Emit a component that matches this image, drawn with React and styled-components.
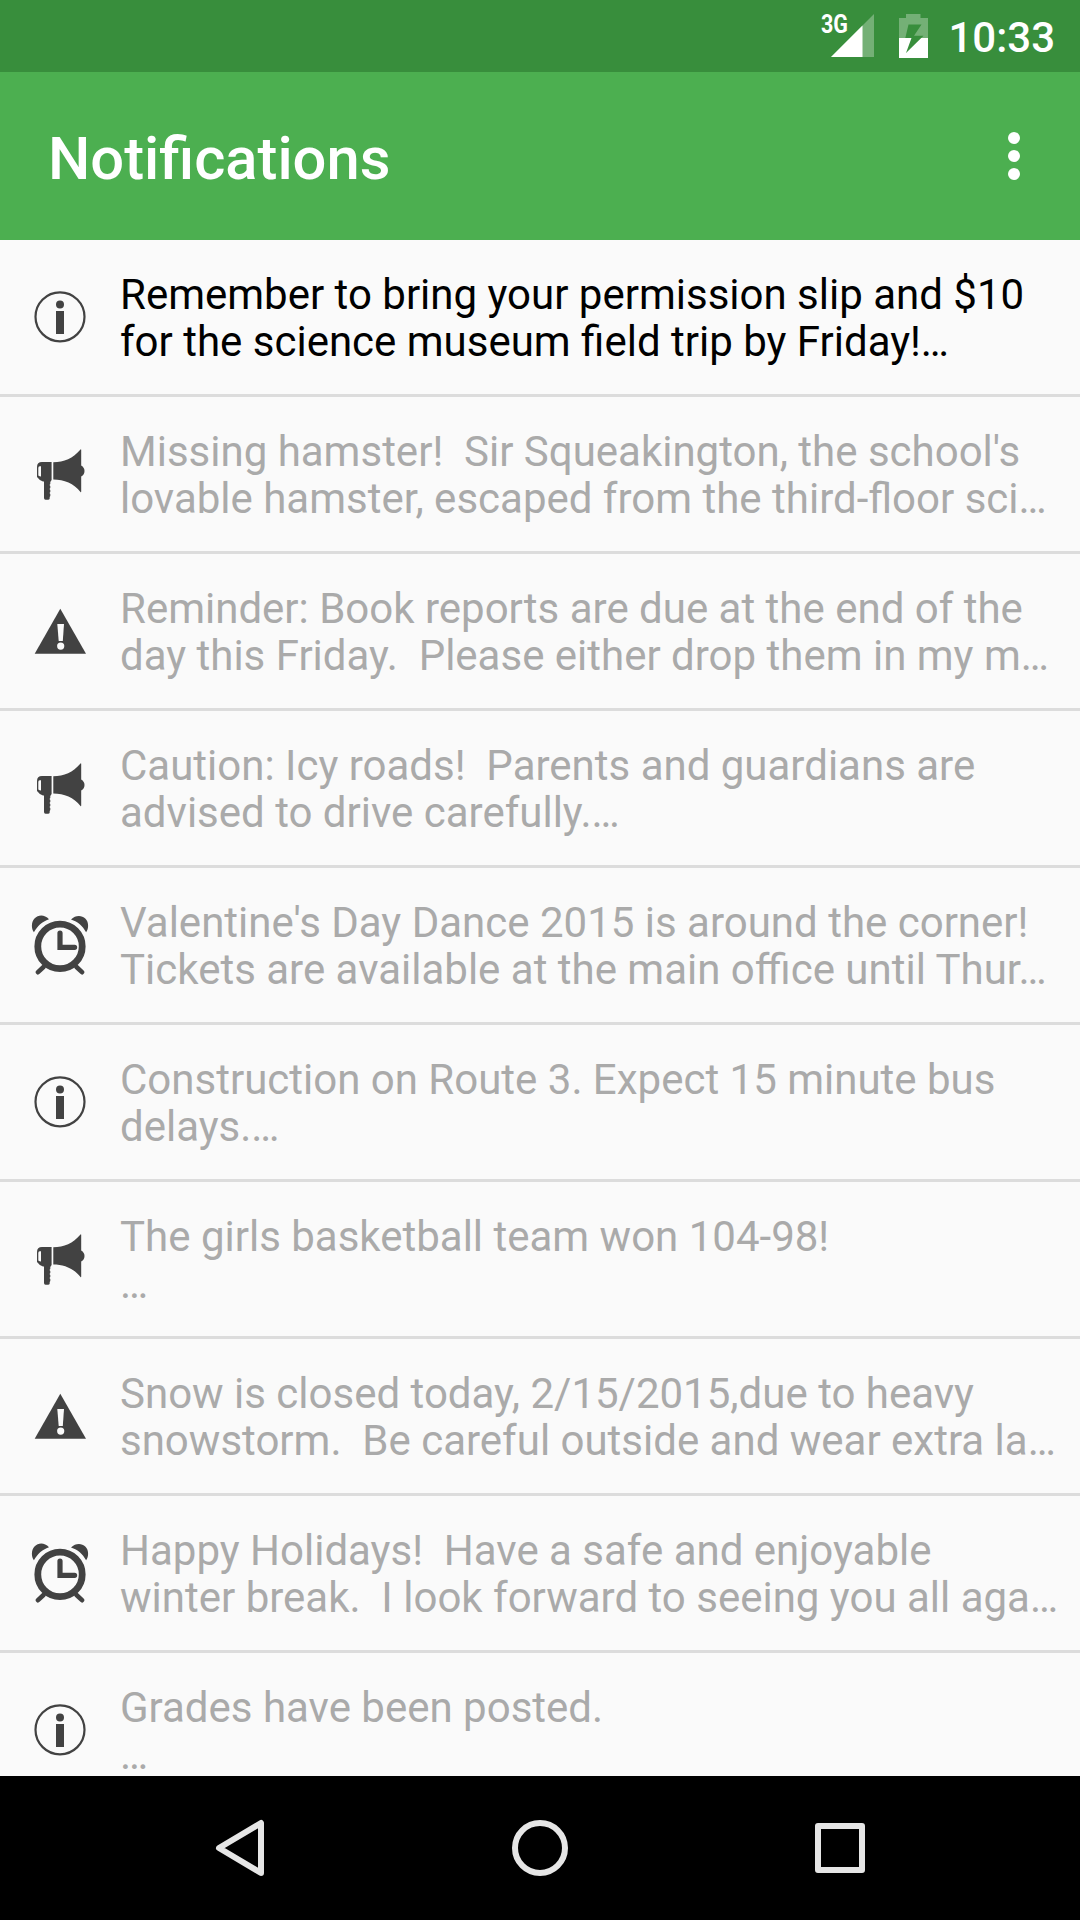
import React from "react";
import styled, { createGlobalStyle } from "styled-components";

const GlobalStyle = createGlobalStyle`
  body {
    margin: 0;
    background: #000;
    font-family: Roboto, "Liberation Sans", sans-serif;
  }
`;

const Screen = styled.div`
  width: 1080px;
  height: 1920px;
  display: flex;
  flex-direction: column;
  overflow: hidden;
  background: #fafafa;
`;

const StatusBar = styled.div`
  flex: none;
  height: 72px;
  box-sizing: border-box;
  padding-right: 25px;
  display: flex;
  align-items: center;
  justify-content: flex-end;
  background: #388e3c;
`;

const StatusIcons = styled.svg`
  width: 110px;
  height: 72px;
  margin-right: 18px;
`;

const NetworkType = styled.text`
  font-size: 26px;
  font-weight: 700;
  fill: #fff;
`;

const Clock = styled.span`
  font-size: 42px;
  line-height: 60px;
  font-weight: 500;
  color: #fff;
  padding-top: 4px;
`;

const AppBar = styled.header`
  flex: none;
  height: 168px;
  box-sizing: border-box;
  padding: 0 60px 0 48px;
  display: flex;
  align-items: center;
  justify-content: space-between;
  background: #4caf50;
`;

const Title = styled.h1`
  margin: 0;
  padding-top: 6px;
  font-size: 59.7px;
  line-height: 70px;
  font-weight: 500;
  color: #fff;
`;

const MenuButton = styled.button`
  padding: 0;
  border: none;
  background: none;
  display: flex;
  flex-direction: column;
  gap: 6px;
  cursor: pointer;
`;

const Dot = styled.span`
  width: 12px;
  height: 12px;
  border-radius: 50%;
  background: #fff;
`;

const List = styled.ul`
  flex: 1;
  min-height: 0;
  margin: 0;
  padding: 0;
  list-style: none;
  overflow: hidden;
`;

const Row = styled.li`
  height: 154px;
  display: flex;
  align-items: center;
  border-bottom: 3px solid #dcdcdc;
  color: ${(props) => (props.$unread ? "#000" : "#aaa")};
`;

const RowIcon = styled.svg`
  flex: none;
  width: 60px;
  height: 60px;
  margin: 0 30px;
  color: #424242;
`;

const Message = styled.p`
  margin: 0;
  padding-top: 2px;
  font-size: 42px;
  line-height: 47px;
  white-space: pre;
`;

const NavBar = styled.nav`
  flex: none;
  height: 144px;
  display: flex;
  align-items: center;
  justify-content: center;
  gap: 210px;
  background: #000;
`;

const NavIcon = styled.svg`
  width: 90px;
  height: 90px;
  fill: none;
  stroke: #e6e6e6;
  stroke-width: 6;
  stroke-linejoin: round;
`;

const InfoIcon = () => (
  <RowIcon viewBox="0 0 60 60">
    <circle cx="30" cy="29.8" r="24.5" fill="none" stroke="currentColor" strokeWidth="2.2" />
    <circle cx="30" cy="17.4" r="4" fill="currentColor" />
    <rect x="26" y="24" width="8" height="23" fill="currentColor" />
  </RowIcon>
);

const BullhornIcon = () => (
  <RowIcon viewBox="0 0 60 60">
    <path
      fill="currentColor"
      fillRule="evenodd"
      d="M12 18H21.6V36L20.3 38V40L19.5 41L20.3 42V44L19.5 45L20.3 46V48L19.5 49L20.3 50V52L19.7 53V54.5Q19.5 55.8 18 55.8H15.5Q14 55.8 14 54V37.6H13Q10 37 7 33V23Q7 18 12 18ZM9.7 22.2Q8.3 22.2 8.3 24V31.5Q9.5 32.5 11 32.5V22.2Z"
    />
    <path
      fill="currentColor"
      d="M23.3 18.2C34 18 43 14.5 50.5 5.5Q51.2 4.8 51.2 6V21.5Q54.5 23.5 54.5 27Q54.5 30.5 51.2 32.5V47.5Q51.2 48.7 50.5 48C44 39.5 34 35.5 23.3 35.5Z"
    />
  </RowIcon>
);

const WarningIcon = () => (
  <RowIcon viewBox="0 0 60 60">
    <path d="M30.3 7.8L56 52.7H4.7Z" fill="currentColor" />
    <path d="M27.3 23H34L32.8 40H28.7Z" fill="#fafafa" />
    <circle cx="30.7" cy="45.1" r="3.6" fill="#fafafa" />
  </RowIcon>
);

const AlarmIcon = () => (
  <RowIcon viewBox="0 0 60 60">
    <path
      fill="currentColor"
      d="M3.9 17.3C1 13 1.3 7 4.5 3.5C8.5 -.5 14.5 -.5 19 4.2C12 6.5 7.5 11 3.9 17.3ZM56.1 17.3C59 13 58.7 7 55.5 3.8C51.5 0 45.5 .2 41 4.6C48 6.8 52.5 11 56.1 17.3Z"
    />
    <g fill="none" stroke="currentColor" strokeLinecap="round">
      <circle cx="30" cy="31.4" r="22.2" strokeWidth="6.8" />
      <path d="M30 18V32.3H44.6" strokeWidth="5.2" />
      <path d="M13.5 52L8 57.2M46.5 52L52 57.2" strokeWidth="4.6" />
    </g>
  </RowIcon>
);

const icons = {
  info: InfoIcon,
  news: BullhornIcon,
  warning: WarningIcon,
  alarm: AlarmIcon,
};

const notifications = [
  {
    type: "info",
    unread: true,
    lines: ["Remember to bring your permission slip and $10", "for the science museum field trip by Friday!…"],
  },
  {
    type: "news",
    lines: ["Missing hamster!  Sir Squeakington, the school's", "lovable hamster, escaped from the third-floor sci…"],
  },
  {
    type: "warning",
    lines: ["Reminder: Book reports are due at the end of the", "day this Friday.  Please either drop them in my m…"],
  },
  {
    type: "news",
    lines: ["Caution: Icy roads!  Parents and guardians are", "advised to drive carefully.…"],
  },
  {
    type: "alarm",
    lines: ["Valentine's Day Dance 2015 is around the corner!", "Tickets are available at the main office until Thur…"],
  },
  {
    type: "info",
    lines: ["Construction on Route 3. Expect 15 minute bus", "delays.…"],
  },
  {
    type: "news",
    lines: ["The girls basketball team won 104-98!", "…"],
  },
  {
    type: "warning",
    lines: ["Snow is closed today, 2/15/2015,due to heavy", "snowstorm.  Be careful outside and wear extra la…"],
  },
  {
    type: "alarm",
    lines: ["Happy Holidays!  Have a safe and enjoyable", "winter break.  I look forward to seeing you all aga…"],
  },
  {
    type: "info",
    lines: ["Grades have been posted.", "…"],
  },
];

const App = () => {
  return (
    <>
      <GlobalStyle />
      <Screen>
        <StatusBar>
          <StatusIcons viewBox="820 0 110 72">
            <NetworkType x="821" y="33.3" textLength="27" lengthAdjust="spacingAndGlyphs">
              3G
            </NetworkType>
            <path d="M831 57L874 14V57Z" fill="#fff" fillOpacity="0.3" />
            <path d="M831 57L862.5 25.5V57Z" fill="#fff" />
            <path d="M906 14H920.5V18H928V38H899V18H906Z" fill="#fff" fillOpacity="0.3" />
            <rect x="899" y="38" width="29" height="20" fill="#fff" />
            <path d="M908.5 24.5H921.5L914 35.7H923.5L906 53L911.5 38H905.3Z" fill="#388e3c" />
          </StatusIcons>
          <Clock>10:33</Clock>
        </StatusBar>
        <AppBar>
          <Title>Notifications</Title>
          <MenuButton aria-label="More options">
            <Dot />
            <Dot />
            <Dot />
          </MenuButton>
        </AppBar>
        <List>
          {notifications.map((item, index) => {
            const Icon = icons[item.type];
            return (
              <Row key={index} $unread={item.unread}>
                <Icon />
                <Message>{item.lines.join("\n")}</Message>
              </Row>
            );
          })}
        </List>
        <NavBar>
          <NavIcon viewBox="0 0 90 90">
            <path d="M66 20V70L24 45Z" />
          </NavIcon>
          <NavIcon viewBox="0 0 90 90">
            <circle cx="45" cy="45" r="25" />
          </NavIcon>
          <NavIcon viewBox="0 0 90 90">
            <rect x="23" y="23" width="44" height="44" />
          </NavIcon>
        </NavBar>
      </Screen>
    </>
  );
};

export default App;
